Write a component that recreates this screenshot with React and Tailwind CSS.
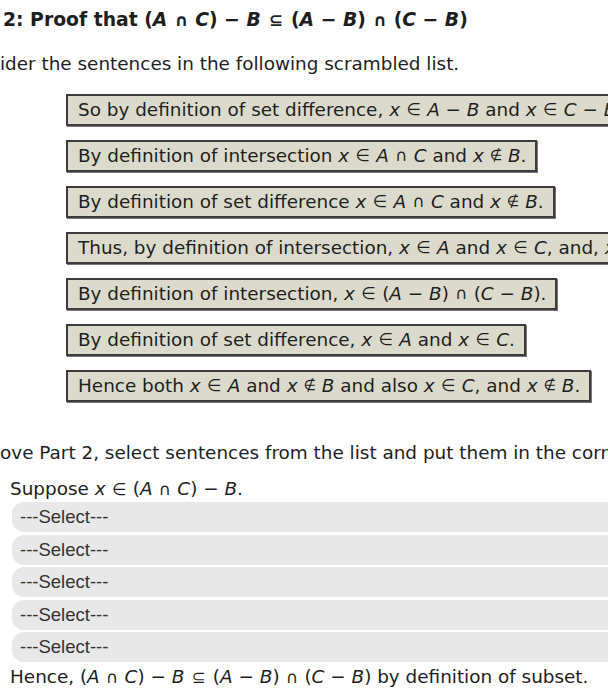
import React from "react";

const I = ({ children }) => <span className="italic">{children}</span>;
const S = ({ children }) => <span className="text-[0.9em] mx-[0.5px]">{children}</span>;
const In = () => <S>∈</S>;
const NIn = () => <span className="text-[0.78em]">∉</span>;
const Cap = () => <S>∩</S>;
const Sub = () => <span className="text-[0.9em] mx-[1.5px]">⊆</span>;

function Box({ children }) {
  return (
    <div className="flex">
      <div className="h-[32px] flex items-center whitespace-nowrap pl-[10px] pr-[9px] bg-[#dcdbcb] border-2 border-[#3c3c3c] shadow-[1px_1px_0_#777]">
        {children}
      </div>
    </div>
  );
}

function Select() {
  return (
    <div className="h-[30px] w-[620px] rounded-l-[12px] bg-[#e8e8e8] flex items-center pl-[8px] font-['Liberation_Sans',sans-serif] text-[18.5px] text-[#333]">
      ---Select---
    </div>
  );
}

export default function App() {
  return (
    <div className="w-[608px] h-[700px] overflow-hidden bg-white text-[#1e1e1e] font-['DejaVu_Sans',sans-serif] text-[18.4px]">
      <div className="pt-[8px] pl-[3px] h-[32px] leading-[24px] font-bold whitespace-nowrap text-[18.8px]">
        2: Proof that (<I>A</I>&nbsp;<Cap />&nbsp;<I>C</I>)&nbsp;−&nbsp;<I>B</I>&nbsp;<Sub />&nbsp;(<I>A</I>&nbsp;−&nbsp;<I>B</I>)&nbsp;<Cap />&nbsp;(<I>C</I>&nbsp;−&nbsp;<I>B</I>)
      </div>
      <div className="mt-[20px] h-[24px] leading-[24px] whitespace-nowrap">
        ider the sentences in the following scrambled list.
      </div>
      <div className="mt-[18px] pl-[66px] flex flex-col gap-[14px]">
        <Box>
          So by definition of set difference,&nbsp;<I>x</I>&nbsp;<In />&nbsp;<I>A</I>&nbsp;−&nbsp;<I>B</I>&nbsp;and&nbsp;<I>x</I>&nbsp;<In />&nbsp;<I>C</I>&nbsp;−&nbsp;<I>B</I>.
        </Box>
        <Box>
          By definition of intersection&nbsp;<I>x</I>&nbsp;<In />&nbsp;<I>A</I>&nbsp;<Cap />&nbsp;<I>C</I>&nbsp;and&nbsp;<I>x</I>&nbsp;<NIn />&nbsp;<I>B</I>.
        </Box>
        <Box>
          By definition of set difference&nbsp;<I>x</I>&nbsp;<In />&nbsp;<I>A</I>&nbsp;<Cap />&nbsp;<I>C</I>&nbsp;and&nbsp;<I>x</I>&nbsp;<NIn />&nbsp;<I>B</I>.
        </Box>
        <Box>
          Thus, by definition of intersection,&nbsp;<I>x</I>&nbsp;<In />&nbsp;<I>A</I>&nbsp;and&nbsp;<I>x</I>&nbsp;<In />&nbsp;<I>C</I>, and,&nbsp;<I>x</I>&nbsp;<NIn />&nbsp;<I>B</I>.
        </Box>
        <Box>
          By definition of intersection,&nbsp;<I>x</I>&nbsp;<In />&nbsp;(<I>A</I>&nbsp;−&nbsp;<I>B</I>)&nbsp;<Cap />&nbsp;(<I>C</I>&nbsp;−&nbsp;<I>B</I>).
        </Box>
        <Box>
          By definition of set difference,&nbsp;<I>x</I>&nbsp;<In />&nbsp;<I>A</I>&nbsp;and&nbsp;<I>x</I>&nbsp;<In />&nbsp;<I>C</I>.
        </Box>
        <Box>
          Hence both&nbsp;<I>x</I>&nbsp;<In />&nbsp;<I>A</I>&nbsp;and&nbsp;<I>x</I>&nbsp;<NIn />&nbsp;<I>B</I>&nbsp;and also&nbsp;<I>x</I>&nbsp;<In />&nbsp;<I>C</I>, and&nbsp;<I>x</I>&nbsp;<NIn />&nbsp;<I>B</I>.
        </Box>
      </div>
      <div className="mt-[39px] h-[24px] leading-[24px] whitespace-nowrap">
        ove Part 2, select sentences from the list and put them in the correct order.
      </div>
      <div className="mt-[12px] pl-[10px] h-[24px] leading-[24px] whitespace-nowrap">
        Suppose&nbsp;<I>x</I>&nbsp;<In />&nbsp;(<I>A</I>&nbsp;<Cap />&nbsp;<I>C</I>)&nbsp;−&nbsp;<I>B</I>.
      </div>
      <div className="mt-[1px] pl-[12px] flex flex-col gap-[2.5px]">
        <Select />
        <Select />
        <Select />
        <Select />
        <Select />
      </div>
      <div className="mt-[3px] pl-[10px] h-[24px] leading-[24px] whitespace-nowrap">
        Hence,&nbsp;(<I>A</I>&nbsp;<Cap />&nbsp;<I>C</I>)&nbsp;−&nbsp;<I>B</I>&nbsp;<Sub />&nbsp;(<I>A</I>&nbsp;−&nbsp;<I>B</I>)&nbsp;<Cap />&nbsp;(<I>C</I>&nbsp;−&nbsp;<I>B</I>) by definition of subset.
      </div>
    </div>
  );
}
